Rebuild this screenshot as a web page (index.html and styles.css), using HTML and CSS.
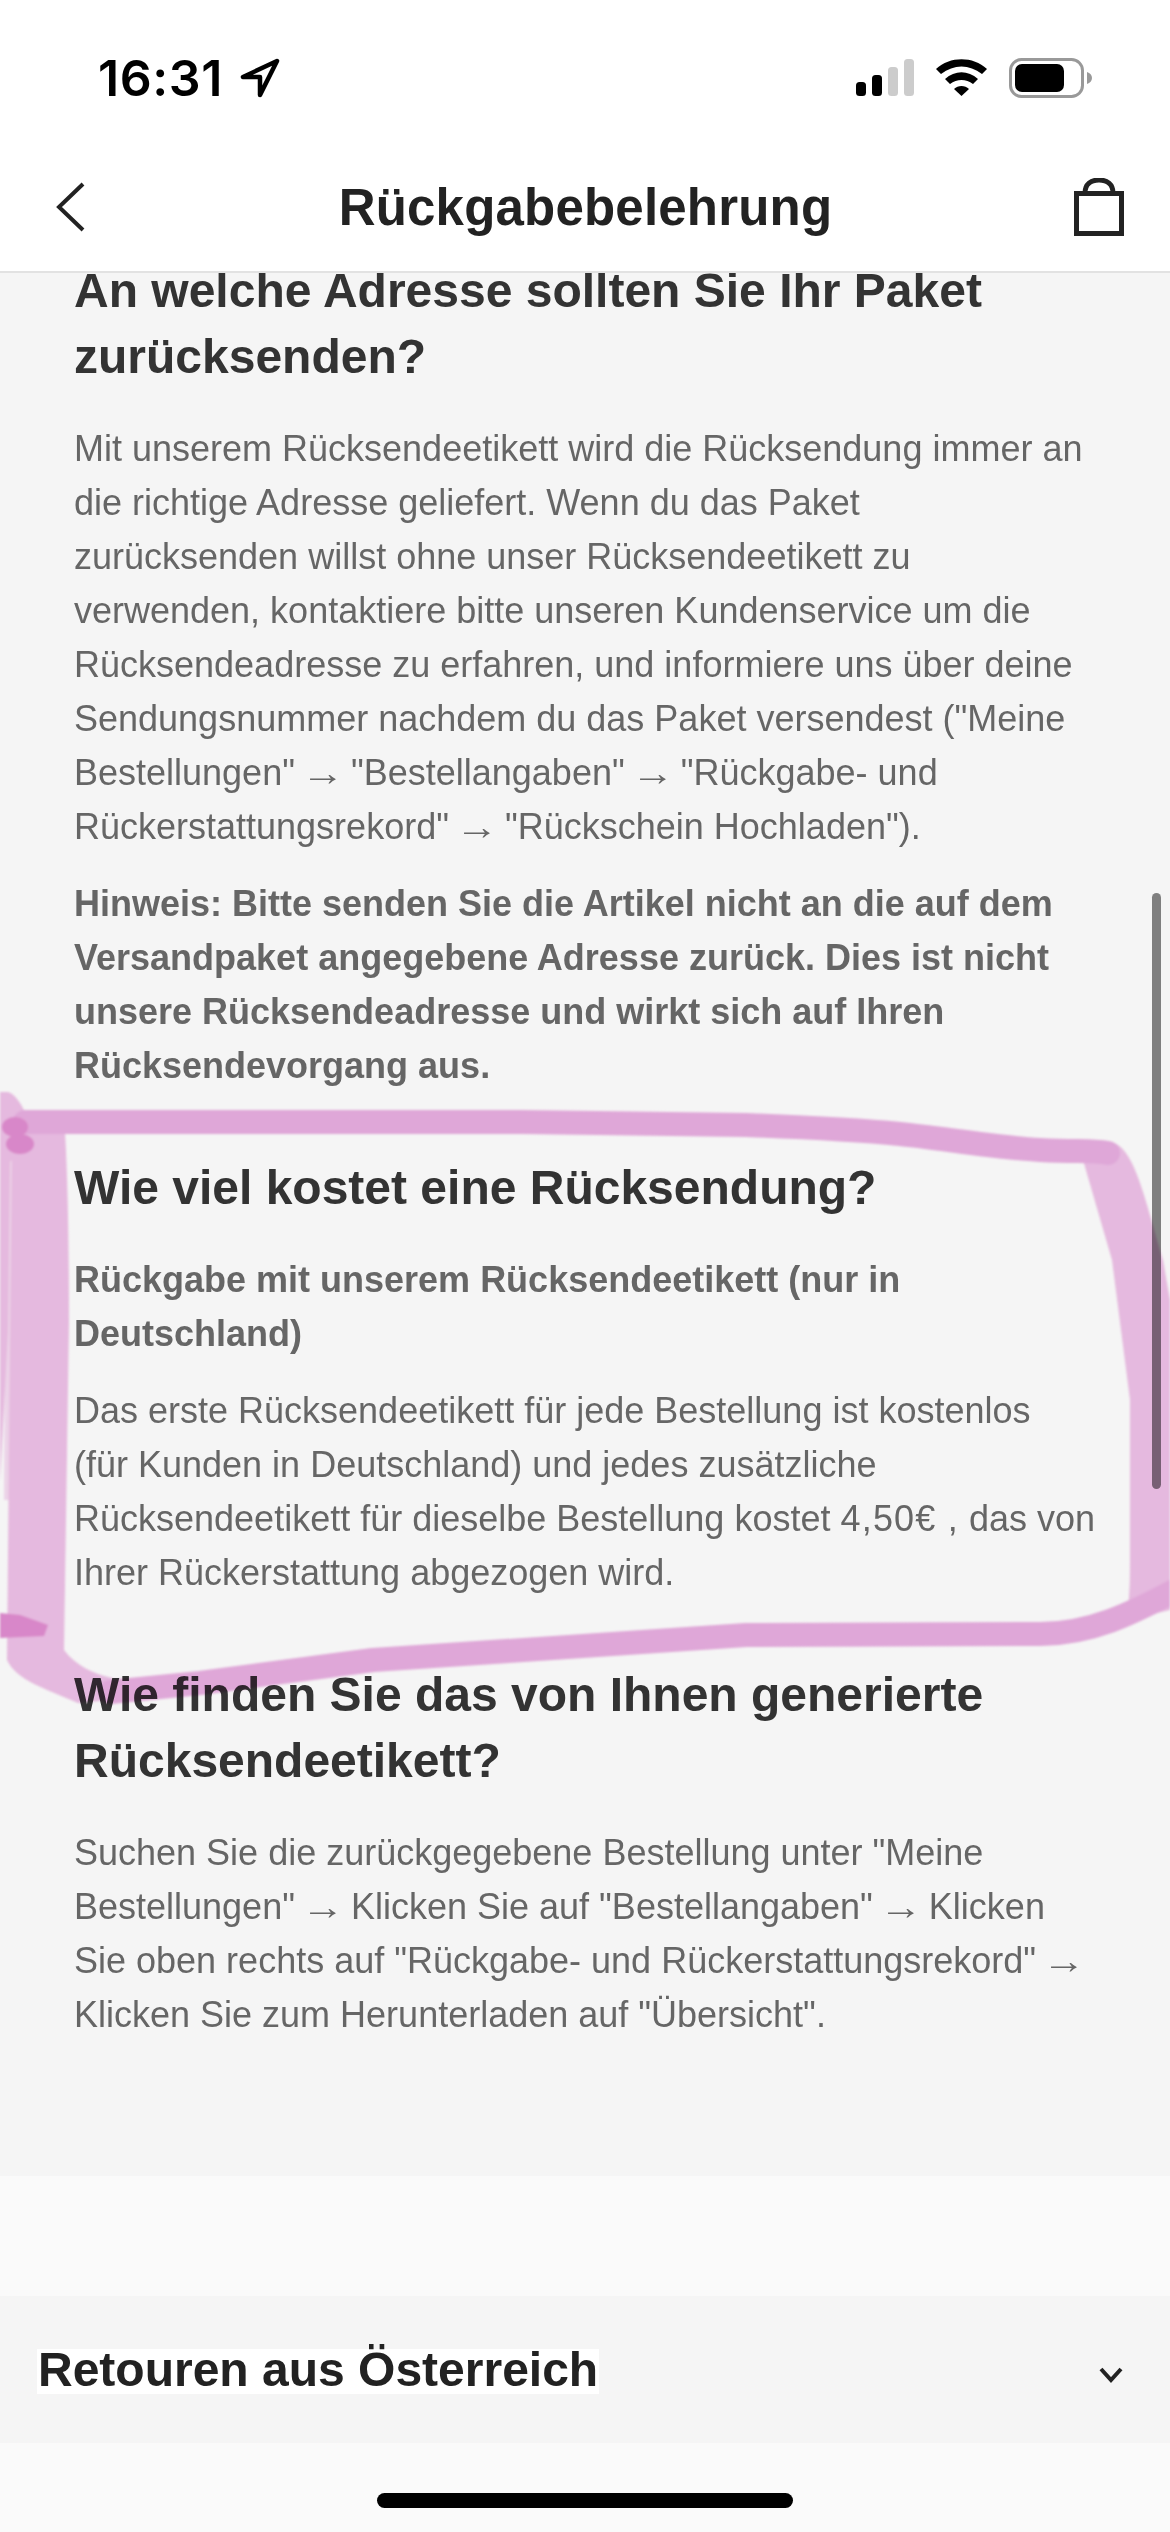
FILE: index.html
```html
<!DOCTYPE html>
<html lang="de">
<head>
<meta charset="utf-8">
<title>Rückgabebelehrung</title>
<link rel="stylesheet" href="styles.css">
</head>
<body>
<header class="top">
  <div class="status">
    <div class="status-left">
      <span class="time">16:31</span>
      <svg class="loc" viewBox="0 0 42 42"><path d="M38 4 4 20h17v18z"/></svg>
    </div>
    <div class="status-right">
      <svg class="signal" viewBox="0 0 58 37">
        <rect class="on" x="0" y="23" width="10" height="14" rx="3.5"/>
        <rect class="on" x="16" y="16" width="10" height="21" rx="3.5"/>
        <rect class="off" x="32" y="8" width="10" height="29" rx="3.5"/>
        <rect class="off" x="48" y="0" width="10" height="37" rx="3.5"/>
      </svg>
      <svg class="wifi" viewBox="0 0 51 37">
        <path d="M0 10C14-3 37-3 51 10l-5 5C33 5 18 5 5 15z"/>
        <path d="M9 20c10-9 23-9 33 0l-5 5c-7-5.500-16-5.500-23 0z"/>
        <path d="M18 30c4-4 11-4 15 0l-7.500 7z"/>
      </svg>
      <svg class="battery" viewBox="0 0 83 40">
        <rect class="shell" x="1.500" y="1.500" width="72" height="37" rx="11"/>
        <rect class="charge" x="6" y="6" width="49" height="28" rx="7"/>
        <path class="cap" d="M78 14c3 1 5 3 5 6s-2 5-5 6z"/>
      </svg>
    </div>
  </div>
  <nav class="nav">
    <svg class="back" viewBox="0 0 30 50"><path d="M27 2 3 25l24 23"/></svg>
    <h1 class="title">Rückgabebelehrung</h1>
    <svg class="bag" viewBox="0 0 50 58"><path class="handle" d="M11 15C11 6 17 2 25 2s14 4 14 13"/><rect x="2.500" y="15.500" width="45" height="40"/></svg>
  </nav>
</header>

<main class="content">
  <div class="scroll">
    <section class="block">
      <h2>An welche Adresse sollten Sie Ihr Paket zurücksenden?</h2>
      <p>Mit unserem Rücksendeetikett wird die Rücksendung immer an<br>die richtige Adresse geliefert. Wenn du das Paket<br>zurücksenden willst ohne unser Rücksendeetikett zu<br>verwenden, kontaktiere bitte unseren Kundenservice um die<br>Rücksendeadresse zu erfahren, und informiere uns über deine<br>Sendungsnummer nachdem du das Paket versendest ("Meine<br>Bestellungen" <span class="arrow">→</span> "Bestellangaben" <span class="arrow">→</span> "Rückgabe- und<br>Rückerstattungsrekord" <span class="arrow">→</span> "Rückschein Hochladen").</p>
      <p class="strong">Hinweis: Bitte senden Sie die Artikel nicht an die auf dem<br>Versandpaket angegebene Adresse zurück. Dies ist nicht<br>unsere Rücksendeadresse und wirkt sich auf Ihren<br>Rücksendevorgang aus.</p>
    </section>
    <section class="block">
      <h2>Wie viel kostet eine Rücksendung?</h2>
      <p class="strong">Rückgabe mit unserem Rücksendeetikett (nur in<br>Deutschland)</p>
      <p>Das erste Rücksendeetikett für jede Bestellung ist kostenlos<br>(für Kunden in Deutschland) und jedes zusätzliche<br>Rücksendeetikett für dieselbe Bestellung kostet <span class="price">4,50€ ,</span> das von<br>Ihrer Rückerstattung abgezogen wird.</p>
    </section>
    <section class="block">
      <h2>Wie finden Sie das von Ihnen generierte Rücksendeetikett?</h2>
      <p>Suchen Sie die zurückgegebene Bestellung unter "Meine<br>Bestellungen" <span class="arrow">→</span> Klicken Sie auf "Bestellangaben" <span class="arrow">→</span> Klicken<br>Sie oben rechts auf "Rückgabe- und Rückerstattungsrekord" <span class="arrow">→</span><br>Klicken Sie zum Herunterladen auf "Übersicht".</p>
    </section>
  </div>
  <div class="scrollbar"></div>
</main>

<div class="band"></div>
<div class="accordion">
  <span class="accordion-title">Retouren aus Österreich</span>
  <svg class="chevron" viewBox="0 0 24 16"><path d="M2 2l10 11L22 2"/></svg>
</div>
<footer class="home"><div class="home-bar"></div></footer>

<svg class="scribble" viewBox="0 0 1170 2532" aria-hidden="true">
  <g class="faint">
    <path d="M6 1150h10v200l-6 150H4z"/>
  </g>
  <g class="side">
    <path d="M0 1092h8c10 3 20 22 25 45l-23 25-2 170-8 150z"/>
    <path d="M12 1135l53-3c3 50 4 120 4 190l-5 328c12 16 30 24 48 28l20 20-54 5C44 1688 16 1680 7 1660z"/>
    <path d="M1083 1160l25-18c25 0 35 50 55 118l7 40v310l-43 10c3-30 3-40 3-60v-160l-18-140-29-100z"/>
  </g>
  <g class="line">
    <path d="M25 1122H522L746 1125C800 1127 860 1130 900 1134S1000 1148 1040 1150 1090 1150 1108 1153"/>
    <path d="M1185 1585C1130 1615 1090 1634 1040 1634L746 1635 373 1660 200 1683 110 1692"/>
  </g>
  <g class="blot">
    <ellipse cx="15" cy="1127" rx="13" ry="10"/>
    <ellipse cx="20" cy="1144" rx="14" ry="10"/>
    <path d="M0 1613l20 2 28 10-4 11-44 2z"/>
  </g>
</svg>
</body>
</html>
```
FILE: styles.css
```css
* { box-sizing: border-box; }
html, body { margin: 0; padding: 0; }
body {
  position: relative;
  width: 1170px;
  height: 2532px;
  overflow: hidden;
  display: flex;
  flex-direction: column;
  background: #fafafa;
  font-family: "Liberation Sans", Arial, sans-serif;
  color: #333;
}

.top { height: 273px; background: #fff; border-bottom: 2px solid #e2e2e2; flex: none; }
.status { height: 157px; display: flex; justify-content: space-between; align-items: flex-start; padding: 57px 78px 0 98px; }
.status-left { display: flex; align-items: center; gap: 16px; }
.time { font-family: Inter, sans-serif; font-weight: 600; font-size: 50px; line-height: 42px; color: #000; letter-spacing: 0.6px; }
.loc { width: 42px; height: 42px; fill: none; stroke: #000; stroke-width: 4.5; stroke-linejoin: round; }
.status-right { display: flex; align-items: flex-start; gap: 22px; padding-top: 2px; }
.signal { width: 58px; height: 37px; }
.signal .on { fill: #000; }
.signal .off { fill: #ccc; }
.wifi { width: 51px; height: 37px; fill: #000; }
.battery { width: 83px; height: 40px; margin-top: -1px; }
.shell { fill: none; stroke: #999; stroke-width: 3; }
.charge { fill: #000; }
.cap { fill: #999; }

.nav { display: grid; grid-template-columns: 1fr auto 1fr; align-items: center; padding: 0 46px 0 47px; height: 100px; }
.back { width: 30px; height: 50px; margin-left: 9px; fill: none; stroke: #222; stroke-width: 4; }
.title { margin: 0; padding-top: 2px; font-size: 51px; font-weight: 700; line-height: 60px; letter-spacing: 0.2px; color: #222; text-align: center; }
.bag { width: 50px; height: 58px; justify-self: end; fill: none; stroke: #222; stroke-width: 5; }

.content { flex: 1; min-height: 0; position: relative; overflow: hidden; background: #f5f5f5; }
.scroll { margin-top: -15px; padding: 0 60px 0 74px; display: flex; flex-direction: column; gap: 62px; }
.block { display: flex; flex-direction: column; gap: 23px; }
h2 { margin: 0 0 9px; font-size: 48px; line-height: 66px; font-weight: 700; color: #333; }
p { margin: 0; font-size: 36px; line-height: 54px; color: #666; }
.strong { font-weight: 700; }
.arrow { display: inline-block; transform: scaleX(1.2); }
.price { letter-spacing: 1.2px; }
.scrollbar { position: absolute; top: 620px; right: 9px; width: 9px; height: 596px; border-radius: 5px; background: #7f7f7f; }

.band { height: 120px; flex: none; background: #fafafa; }
.accordion { height: 147px; flex: none; background: #f5f5f5; display: flex; justify-content: space-between; align-items: flex-start; padding: 53px 47px 0 37px; }
.accordion-title { display: inline-block; background: #fff; font-size: 48px; font-weight: 700; line-height: 42px; padding: 0 1px 3px; color: #222; }
.chevron { width: 24px; height: 16px; margin-top: 18px; fill: none; stroke: #222; stroke-width: 4; }
.home { height: 89px; flex: none; padding-top: 50px; display: flex; justify-content: center; align-items: flex-start; background: #fafafa; }
.home-bar { width: 416px; height: 15px; border-radius: 8px; background: #000; }

.scribble { position: absolute; left: 0; top: 0; width: 1170px; height: 2532px; mix-blend-mode: multiply; filter: blur(1px); pointer-events: none; }
.faint { fill: #f6dcf2; }
.side { fill: #efc1e8; }
.line { fill: none; stroke: #e9aee1; stroke-width: 24; stroke-linecap: round; stroke-linejoin: round; }
.blot { fill: #e18dd1; }
```
